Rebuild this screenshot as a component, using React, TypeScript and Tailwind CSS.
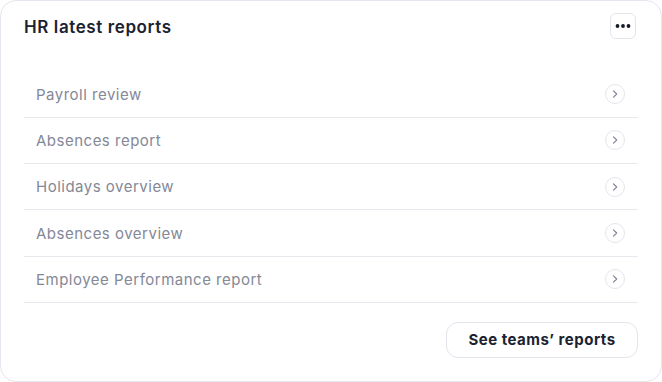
import React from "react";

const rows = [
  "Payroll review",
  "Absences report",
  "Holidays overview",
  "Absences overview",
  "Employee Performance report",
];

function Chevron() {
  return (
    <div className="flex h-[20px] w-[20px] items-center justify-center rounded-full border border-[#e4e5ec]">
      <svg width="10" height="10" viewBox="0 0 10 10" fill="none">
        <path d="M3.5 1.8 L6.7 5 L3.5 8.2" stroke="#7c8091" strokeWidth="1.1" strokeLinecap="round" strokeLinejoin="round" />
      </svg>
    </div>
  );
}

export default function App() {
  return (
    <div
      className="h-[382px] w-[662px] bg-white"
      style={{ fontFamily: "Inter, 'Noto Sans', sans-serif" }}
    >
      <div className="flex h-[382px] w-[662px] flex-col rounded-[16px] border border-[#e5e6ee] bg-white px-[23px] pt-[12px]">
        <div className="flex h-[26px] items-center justify-between pr-[2px]">
          <h1 className="pt-[4px] text-[17px] font-semibold tracking-[0.6px] text-[#1b2230]">HR latest reports</h1>
          <button className="flex h-[26px] w-[26px] items-center justify-center rounded-[6px] border border-[#e4e5ec] bg-white">
            <svg width="16" height="4" viewBox="0 0 16 4">
              <circle cx="2.5" cy="2" r="1.9" fill="#141a26" />
              <circle cx="8" cy="2" r="1.9" fill="#141a26" />
              <circle cx="13.5" cy="2" r="1.9" fill="#141a26" />
            </svg>
          </button>
        </div>
        <div className="mt-[32.5px] flex flex-col">
          {rows.map((r) => (
            <div
              key={r}
              className="flex h-[46.25px] items-center justify-between border-b border-[#e7e8ee] pl-[12px] pr-[13px]"
            >
              <span className="pt-[2px] text-[15px] tracking-[0.5px] text-[#848897]">{r}</span>
              <Chevron />
            </div>
          ))}
        </div>
        <div className="mt-[19px] flex justify-end">
          <button className="h-[36px] w-[192px] rounded-[12px] border border-[#e4e5ec] bg-white pt-[1px] text-[15px] font-bold tracking-[0.5px] text-[#1b2230]">
            See teams’ reports
          </button>
        </div>
      </div>
    </div>
  );
}
